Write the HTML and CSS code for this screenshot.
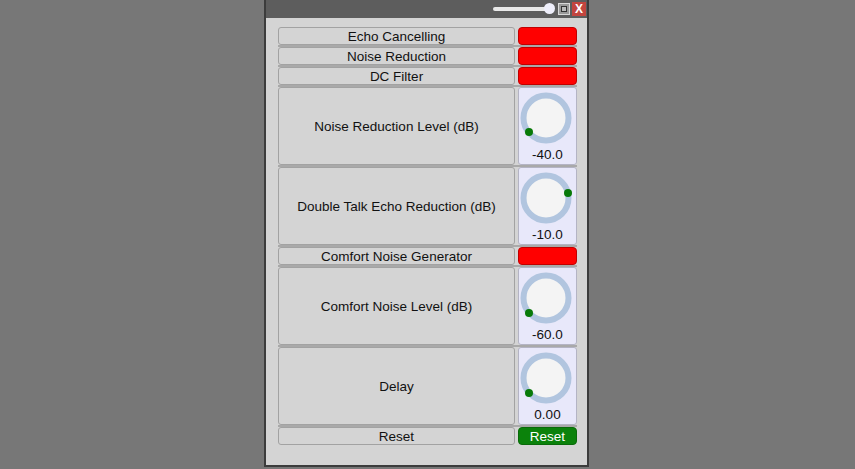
FILE: index.html
```html
<!DOCTYPE html>
<html lang="en">
<head>
    <meta charset="UTF-8">
    <title>Echo Canceller</title>
    <link rel="stylesheet" href="styles.css">
</head>
<body>
    <div class="window">
        <div class="titlebar">
            <div class="zoom">
                <span class="track"></span>
                <span class="thumb"></span>
            </div>
            <span class="btn-restore"><span></span></span>
            <span class="btn-close">X</span>
        </div>
        <div class="panel">
            <div class="rows">
                <div class="row">
                    <div class="label">Echo Cancelling</div>
                    <div class="toggle"></div>
                </div>
                <div class="row">
                    <div class="label">Noise Reduction</div>
                    <div class="toggle"></div>
                </div>
                <div class="row">
                    <div class="label">DC Filter</div>
                    <div class="toggle"></div>
                </div>
                <div class="row big">
                    <div class="label">Noise Reduction Level (dB)</div>
                    <div class="knob">
                        <svg width="59" height="60" viewBox="0 0 59 60">
                            <circle cx="29" cy="30" r="22.5" class="ring"/>
                            <circle cx="12" cy="44" r="4" class="dot"/>
                        </svg>
                        <span class="value">-40.0</span>
                    </div>
                </div>
                <div class="row big">
                    <div class="label">Double Talk Echo Reduction (dB)</div>
                    <div class="knob">
                        <svg width="59" height="60" viewBox="0 0 59 60">
                            <circle cx="29" cy="30" r="22.5" class="ring"/>
                            <circle cx="51" cy="25" r="4" class="dot"/>
                        </svg>
                        <span class="value">-10.0</span>
                    </div>
                </div>
                <div class="row">
                    <div class="label">Comfort Noise Generator</div>
                    <div class="toggle"></div>
                </div>
                <div class="row big">
                    <div class="label">Comfort Noise Level (dB)</div>
                    <div class="knob">
                        <svg width="59" height="60" viewBox="0 0 59 60">
                            <circle cx="29" cy="30" r="22.5" class="ring"/>
                            <circle cx="12" cy="45" r="4" class="dot"/>
                        </svg>
                        <span class="value">-60.0</span>
                    </div>
                </div>
                <div class="row big">
                    <div class="label">Delay</div>
                    <div class="knob">
                        <svg width="59" height="60" viewBox="0 0 59 60">
                            <circle cx="29" cy="30" r="22.5" class="ring"/>
                            <circle cx="12" cy="45" r="4" class="dot"/>
                        </svg>
                        <span class="value">0.00</span>
                    </div>
                </div>
                <div class="row">
                    <div class="label">Reset</div>
                    <button type="button" class="reset">Reset</button>
                </div>
            </div>
        </div>
    </div>
</body>
</html>
```

FILE: styles.css
```css
body {
    margin: 0;
    background-color: #777777;
    font-family: "Liberation Sans", Arial, sans-serif;
    font-size: 13.5px;
    color: #111;
}
.window {
    width: 321px;
    height: 465px;
    margin-left: 264px;
    border: 2px solid #3c3c3c;
    border-top: none;
    background-color: #d3d3d3;
    display: flex;
    flex-direction: column;
}
.titlebar {
    height: 18px;
    background-color: #5d5d5d;
    display: flex;
    justify-content: flex-end;
    align-items: center;
    padding-right: 1px;
}
.zoom {
    position: relative;
    width: 62px;
    height: 12px;
    margin-right: 3px;
}
.track {
    position: absolute;
    left: 0;
    top: 4px;
    width: 58px;
    height: 4px;
    border-radius: 2px;
    background-color: #e9e9e9;
}
.thumb {
    position: absolute;
    right: 0;
    top: 0;
    width: 11px;
    height: 11px;
    border-radius: 50%;
    background-color: #eeeefa;
}
.btn-restore {
    width: 12px;
    height: 12px;
    box-sizing: border-box;
    background-color: #9a9a9a;
    border: 1px solid #d8d8d8;
    display: flex;
    align-items: center;
    justify-content: center;
    margin-right: 2px;
}
.btn-restore span {
    width: 6px;
    height: 6px;
    box-sizing: border-box;
    border: 1px solid #333;
    background-color: #bbb;
}
.btn-close {
    width: 14px;
    height: 14px;
    background-color: #c2453f;
    color: #fff;
    font-weight: bold;
    font-size: 12px;
    line-height: 14px;
    text-align: center;
}
.panel {
    flex: 1;
    padding: 9px 10px 0 12px;
    background-color: #d4d4d4;
}
.rows {
    display: flex;
    flex-direction: column;
    gap: 2px;
    background-color: #a9a9a9;
}
.row {
    display: grid;
    grid-template-columns: 237px 59px;
    column-gap: 3px;
    height: 18px;
    background-color: #d4d4d4;
}
.row.big {
    height: 78px;
}
.label {
    box-sizing: border-box;
    border: 1px solid #a2a2a2;
    border-radius: 3px;
    background-color: #d4d4d4;
    display: flex;
    align-items: center;
    justify-content: center;
}
.toggle {
    border: 1px solid #c00000;
    border-radius: 4px;
    background-color: #ff0000;
    box-sizing: border-box;
}
.knob {
    box-sizing: border-box;
    border: 1px solid #b4b4c4;
    border-radius: 3px;
    background-color: #e8e8fa;
    display: flex;
    flex-direction: column;
    align-items: center;
}
.knob svg {
    display: block;
    margin-left: -2px;
}
.ring {
    fill: #f4f4f4;
    stroke: #b1c5df;
    stroke-width: 6;
}
.dot {
    fill: #087a08;
}
.value {
    margin-top: -1px;
    line-height: 15px;
}
.reset {
    box-sizing: border-box;
    border: 1px solid #0a6a0a;
    border-radius: 4px;
    background-color: #0b820b;
    color: #fff;
    font-family: inherit;
    font-size: 13.5px;
    padding: 0;
    height: 18px;
}
```
